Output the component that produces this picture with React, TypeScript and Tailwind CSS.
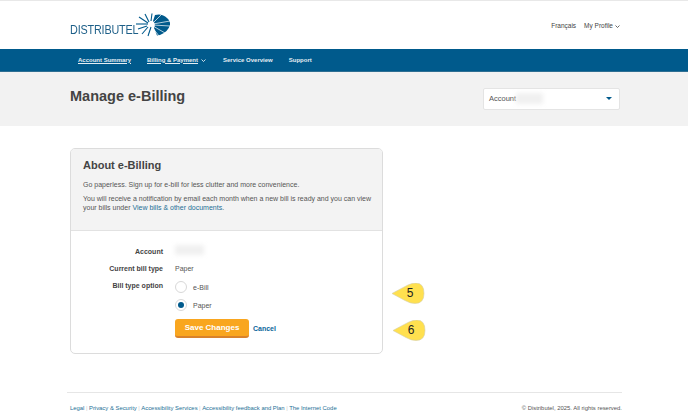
import React from "react";

function Chevron({ className }: { className: string }) {
  return (
    <svg viewBox="0 0 10 6" className={className} fill="none" stroke="currentColor" strokeWidth="1.6">
      <path d="M1 1l4 4 4-4" />
    </svg>
  );
}

function Logo() {
  return (
    <div className="relative w-[101px] h-[24px]">
      <svg width="101" height="24" viewBox="0 0 101 24" className="absolute left-0 top-0">
        <g stroke="#005a8c" strokeWidth="1.1">
          <path d="M78 11L66 11" />
          <path d="M78 10L69 4" />
          <path d="M79 9L75 1" />
          <path d="M81 8L82 0.500" />
          <path d="M77 13L68 16" />
          <path d="M78 14L72 21" />
          <path d="M81 14L78 23" />
        </g>
        <path d="M85 2Q92 0 97 5Q100.500 8 100 12Q98 19 90 22L87 22.500L84 15Q86 11 83 8Z" fill="#005a8c" />
        <path d="M83 11L100 8M83 12L100 13M83 13L95 20M82 14L89 23M84 9L92 1" stroke="#fff" strokeWidth="0.7" />
      </svg>
      <span className="absolute left-0 top-[10px] text-[#1d5f88] text-[13.500px] leading-[14px] tracking-[-0.2px] origin-left scale-x-[0.8]">DISTRIBUTEL</span>
    </div>
  );
}

function Blur({ className }: { className: string }) {
  return <span className={`inline-block bg-[#f0f0f0] blur-[2px] ${className}`} />;
}

function Badge({ n }: { n: string }) {
  return (
    <div className="relative w-[33px] h-[21px]">
      <svg width="33" height="21" viewBox="0 0 33 21" className="absolute inset-0">
        <path d="M0 10.500Q10 5 16 2Q20 0 24 0Q32 0 32 10.500Q32 20.500 23 20.500Q18 20.500 13 17.500Z" fill="#ffe04f" stroke="#d5cfa8" strokeWidth="0.6" />
      </svg>
      <span className="absolute left-[10px] top-0 w-[16px] text-center text-[12px] leading-[21px] text-[#222]">{n}</span>
    </div>
  );
}

export default function App() {
  return (
    <div className="relative w-[688px] h-[415px] overflow-hidden bg-white font-['Liberation_Sans',Arial,sans-serif] text-[#555] flex flex-col">
      <div className="h-px bg-[#e8e8e8]" />
      <header className="h-[48px] flex items-center justify-between pl-[70px] pr-[68px]">
        <Logo />
        <div className="flex items-center text-[6.500px] text-[#444] mt-[2px] font-medium">
          <span>Français</span>
          <span className="ml-[8px]">My Profile</span>
          <Chevron className="w-[5px] h-[3px] ml-[2px]" />
        </div>
      </header>
      <nav className="h-[23px] bg-[#005a8c] border-b border-[#2f6f93] flex items-center pl-[78px] text-[6px] font-bold text-[#e4edf3]">
        <span className="underline w-[69px]">Account Summary</span>
        <span className="underline">Billing &amp; Payment</span>
        <Chevron className="w-[5px] h-[3px] ml-[3px] text-white" />
        <span className="ml-[17px]">Service Overview</span>
        <span className="ml-[16px]">Support</span>
      </nav>
      <section className="h-[54px] bg-[#f2f2f2] flex items-center justify-between pl-[70px] pr-[68px]">
        <h1 className="text-[14.500px] font-bold text-[#444] mt-[-4px]">Manage e-Billing</h1>
        <div className="w-[137px] h-[22px] bg-white border border-[#e4e4e4] rounded-[2px] flex items-center pl-[5px] pr-[7px] mt-[-1px]">
          <span className="text-[7.500px]">Account</span>
          <Blur className="w-[27px] h-[11px]" />
          <span className="ml-auto w-0 h-0 border-x-[3px] border-x-transparent border-t-[3px] border-t-[#005a8c]" />
        </div>
      </section>
      <main className="relative flex-1 pl-[70px]">
        <div className="mt-[22px] w-[313px] h-[206px] border border-[#dcdcdc] rounded-[5px] overflow-hidden flex flex-col">
          <div className="h-[82px] shrink-0 bg-[#f3f3f3] border-b border-[#e2e2e2] pl-[12px] pr-[6px] pt-[9px] text-[7px] leading-[9px] text-[#555]">
            <h2 className="text-[11px] leading-[15px] font-bold text-[#444]">About e-Billing</h2>
            <p className="mt-[7px]">Go paperless. Sign up for e-bill for less clutter and more convenience.</p>
            <p className="mt-[5px]">You will receive a notification by email each month when a new bill is ready and you can view your bills under <span className="text-[#1d6f96]">View bills &amp; other documents</span>.</p>
          </div>
          <div className="flex flex-col text-[7px] leading-[11px] pt-[14px]">
            <div className="flex items-center h-[12px]">
              <span className="w-[92px] text-right font-bold text-[#444]">Account</span>
              <Blur className="ml-[12px] w-[29px] h-[10px] mt-[-3px]" />
            </div>
            <div className="flex items-center h-[12px] mt-[5px]">
              <span className="w-[92px] text-right font-bold text-[#444]">Current bill type</span>
              <span className="ml-[12px]">Paper</span>
            </div>
            <div className="flex mt-[6px]">
              <span className="w-[92px] text-right font-bold text-[#444] h-[12px]">Bill type option</span>
              <div className="ml-[12px] flex flex-col gap-[6px] mt-[1px]">
                <div className="flex items-center h-[12px]">
                  <span className="w-[12px] h-[12px] rounded-full border border-[#d8d8d8] bg-white" />
                  <span className="ml-[6px]">e-Bill</span>
                </div>
                <div className="flex items-center h-[12px]">
                  <span className="w-[12px] h-[12px] rounded-full border border-[#d8d8d8] bg-white flex items-center justify-center">
                    <span className="w-[6px] h-[6px] rounded-full bg-[#005a8c]" />
                  </span>
                  <span className="ml-[6px]">Paper</span>
                </div>
              </div>
            </div>
            <div className="flex items-center ml-[104px] mt-[8px]">
              <span className="w-[74px] h-[19px] rounded-[3px] bg-[#f9a61f] border-b-2 border-[#d9822b] text-white font-bold text-[8px] flex items-center justify-center">Save Changes</span>
              <span className="ml-[4px] font-bold text-[#0a659b] text-[7px]">Cancel</span>
            </div>
          </div>
        </div>
        <div className="absolute left-[392px] top-[157px]"><Badge n="5" /></div>
        <div className="absolute left-[393px] top-[194px]"><Badge n="6" /></div>
      </main>
      <footer className="absolute top-[392px] left-[67px] w-[555px] border-t border-[#e6e6e6] pt-[11px] pl-[3px] flex justify-between text-[5.900px] leading-[9px]">
        <div className="text-[#1d6f96] flex items-center">
          <span>Legal</span><span className="mx-[1.500px] text-[#ccc]">|</span>
          <span>Privacy &amp; Security</span><span className="mx-[1.500px] text-[#ccc]">|</span>
          <span>Accessibility Services</span><span className="mx-[1.500px] text-[#ccc]">|</span>
          <span>Accessibility feedback and Plan</span><span className="mx-[1.500px] text-[#ccc]">|</span>
          <span>The Internet Code</span>
        </div>
        <span>© Distributel, 2025. All rights reserved.</span>
      </footer>
    </div>
  );
}
